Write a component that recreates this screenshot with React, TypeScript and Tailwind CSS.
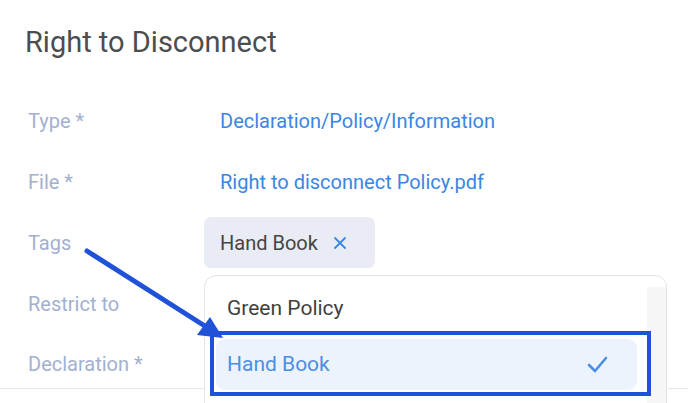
import React from "react";

const font = { fontFamily: "Roboto, 'Noto Sans', sans-serif" };

function Row({ label, children, last }: { label: string; children: React.ReactNode; last?: boolean }) {
  return (
    <div className={last ? "flex h-[55px] items-center pt-[6px] border-b border-[#e6e8ec]" : "flex h-[61px] items-center"}>
      <div className="w-[204px] pl-[28px] shrink-0 text-[20px] text-[#a2b0d1]">{label}</div>
      <div className="flex-1 flex items-center">{children}</div>
    </div>
  );
}

export default function App() {
  return (
    <div className="relative w-[688px] h-[403px] overflow-hidden bg-white" style={font}>
      <div className="h-[90px] pt-[25px] pl-[25px]">
        <div className="text-[29px] leading-[34px] text-[#4d4d4d]">Right to Disconnect</div>
      </div>
      <Row label="Type *">
        <span className="pl-[16px] text-[20px] text-[#3a86e4]">Declaration/Policy/Information</span>
      </Row>
      <Row label="File *">
        <span className="pl-[16px] text-[20px] text-[#3a86e4]">Right to disconnect Policy.pdf</span>
      </Row>
      <Row label="Tags">
        <div className="flex h-[51px] w-[171px] items-center rounded-[7px] bg-[#e9ecf5] pl-[16px]">
          <span className="text-[20px] text-[#454545]">Hand Book</span>
          <svg className="ml-[16px]" width="12" height="12" viewBox="0 0 12 12">
            <path d="M1 1 L11 11 M11 1 L1 11" stroke="#3a86e4" strokeWidth="1.8" strokeLinecap="round" />
          </svg>
        </div>
      </Row>
      <Row label="Restrict to">
        <span />
      </Row>
      <Row label="Declaration *" last>
        <span />
      </Row>

      {/* Dropdown menu */}
      <div className="absolute left-[204px] top-[275px] w-[463px] h-[170px] flex rounded-[12px] border border-[#dfe3ea] bg-white">
        <div className="flex-1 flex flex-col gap-[5px] pt-[7px] pl-[11px] pr-[10px]">
          <div className="flex h-[51px] items-center pl-[11px] text-[21px] text-[#3f3f3f]">Green Policy</div>
          <div className="flex h-[51px] items-center justify-between rounded-[9px] bg-[#edf3fc] pl-[11px] pr-[29px] text-[21px] text-[#4a8fe2]">
            <span>Hand Book</span>
            <svg width="21" height="17" viewBox="0 0 21 17">
              <path d="M2 9 L8 15 L19 2" fill="none" stroke="#4a8fe2" strokeWidth="2.6" strokeLinecap="round" strokeLinejoin="round" />
            </svg>
          </div>
        </div>
        <div className="mt-[11px] w-[19px] bg-[#f6f6f7]" />
      </div>

      {/* Annotation overlay */}
      <svg className="absolute left-0 top-0 pointer-events-none" width="688" height="403" viewBox="0 0 688 403">
        <rect x="212" y="333" width="437" height="61" fill="none" stroke="#1f52d9" strokeWidth="4" />
        <line x1="87" y1="251" x2="208" y2="328" stroke="#1f52d9" strokeWidth="5" strokeLinecap="round" />
        <polygon points="223,338 197,335 210,317" fill="#1f52d9" />
      </svg>
    </div>
  );
}
